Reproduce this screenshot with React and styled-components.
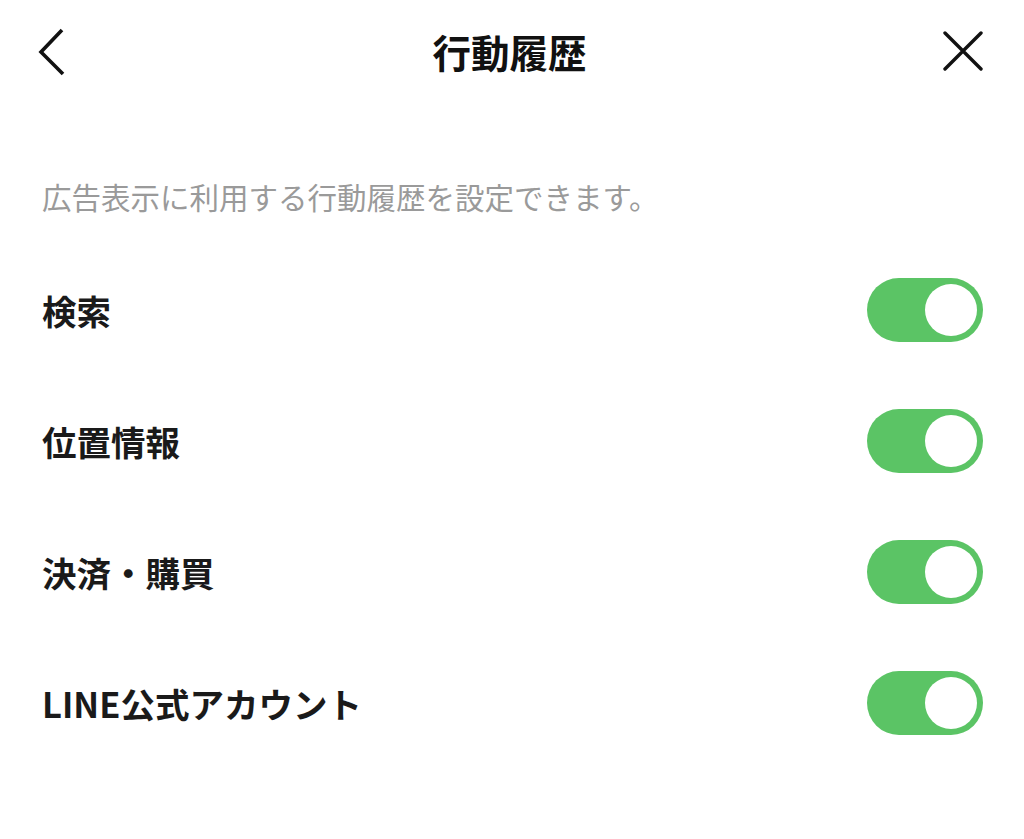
import React, { useState } from "react";
import styled, { createGlobalStyle } from "styled-components";

const Global = createGlobalStyle`
  html, body { margin: 0; padding: 0; background: #ffffff; }
  body { font-family: "Noto Sans CJK JP", "Noto Sans", sans-serif; -webkit-font-smoothing: antialiased; }
  * { box-sizing: border-box; }
`;

const Page = styled.div`
  width: 1024px;
  min-height: 839px;
  background: #fff;
  display: flex;
  flex-direction: column;
`;

const Header = styled.header`
  height: 102px;
  display: grid;
  grid-template-columns: 80px 1fr 80px;
  align-items: center;
  padding: 0 41px 0 36px;
`;

const IconButton = styled.button`
  border: 0;
  background: none;
  padding: 0;
  width: 52px;
  height: 52px;
  display: flex;
  align-items: center;
  justify-content: ${(p) => (p.$end ? "flex-end" : "flex-start")};
  justify-self: ${(p) => (p.$end ? "end" : "start")};
  cursor: pointer;
  color: #111;
`;

const Title = styled.h1`
  margin: 0;
  text-align: center;
  font-size: 38.5px;
  font-weight: 700;
  color: #111;
  letter-spacing: 0;
`;

const Description = styled.p`
  margin: 74px 0 28px;
  padding: 0 42px;
  font-size: 29.5px;
  line-height: 40px;
  color: #9a9a9a;
  font-weight: 400;
  white-space: nowrap;
`;

const List = styled.ul`
  list-style: none;
  margin: 0;
  padding: 0;
`;

const Row = styled.li`
  height: 131px;
  display: flex;
  align-items: center;
  justify-content: space-between;
  padding: 0 41px 0 42px;
`;

const Label = styled.span`
  font-size: 34.5px;
  font-weight: 700;
  color: #1a1a1a;
`;

const Switch = styled.button`
  position: relative;
  width: 116px;
  height: 64px;
  border: 0;
  padding: 0;
  border-radius: 32px;
  background: ${(p) => (p.$on ? "#5bc465" : "#d9d9d9")};
  cursor: pointer;
  transition: background 0.2s;
`;

const Knob = styled.span`
  position: absolute;
  top: 6px;
  left: ${(p) => (p.$on ? "58px" : "6px")};
  width: 52px;
  height: 52px;
  border-radius: 50%;
  background: #fff;
  transition: left 0.2s;
`;

const items = ["検索", "位置情報", "決済・購買", "LINE公式アカウント"];

export default function App() {
  const [state, setState] = useState(items.map(() => true));
  return (
    <Page>
      <Global />
      <Header>
        <IconButton aria-label="戻る">
          <svg width="30" height="50" viewBox="0 0 30 50" fill="none">
            <path d="M26 4 L5 26 L27 48" stroke="#111" strokeWidth="3.6" strokeLinecap="butt" strokeLinejoin="miter" />
          </svg>
        </IconButton>
        <Title>行動履歴</Title>
        <IconButton $end aria-label="閉じる">
          <svg width="40" height="40" viewBox="0 0 40 40" fill="none">
            <path d="M2 2 L38 38 M38 2 L2 38" stroke="#111" strokeWidth="3.4" strokeLinecap="round" />
          </svg>
        </IconButton>
      </Header>
      <Description>広告表示に利用する行動履歴を設定できます。</Description>
      <List>
        {items.map((label, i) => (
          <Row key={label}>
            <Label>{label}</Label>
            <Switch
              $on={state[i]}
              aria-label={label}
              onClick={() => setState((s) => s.map((v, j) => (j === i ? !v : v)))}
            >
              <Knob $on={state[i]} />
            </Switch>
          </Row>
        ))}
      </List>
    </Page>
  );
}
